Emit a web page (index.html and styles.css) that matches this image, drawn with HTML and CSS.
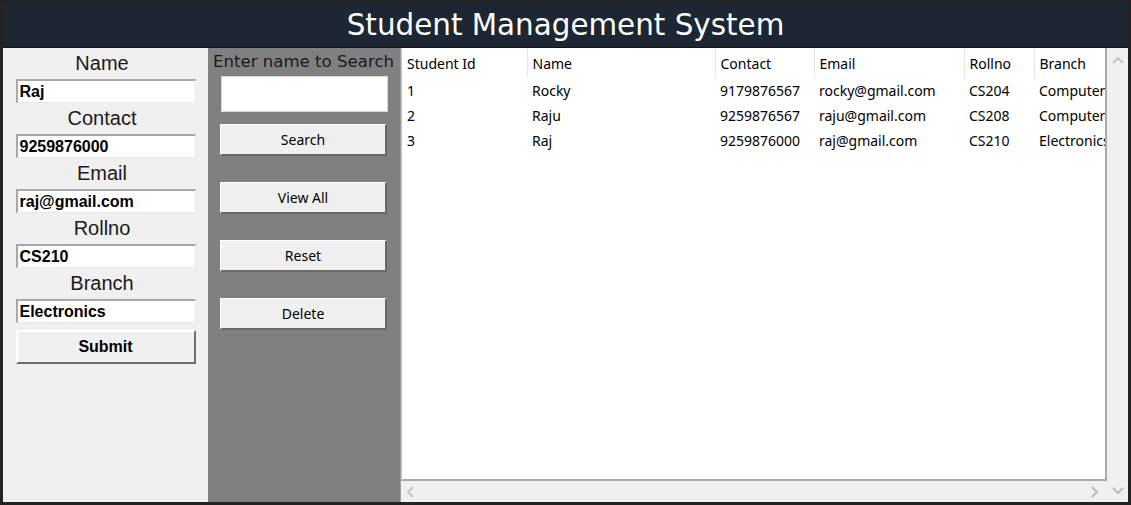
FILE: index.html
```html
<!DOCTYPE html>
<html>
<head>
<meta charset="utf-8">
<link rel="stylesheet" href="styles.css">
</head>
<body>
<div class="frame">
  <header class="title-bar">Student Management System</header>
  <main class="main">
    <section class="form-panel">
      <div class="field-label">Name</div>
      <div class="entry">Raj</div>
      <div class="field-label">Contact</div>
      <div class="entry">9259876000</div>
      <div class="field-label">Email</div>
      <div class="entry">raj@gmail.com</div>
      <div class="field-label">Rollno</div>
      <div class="entry">CS210</div>
      <div class="field-label">Branch</div>
      <div class="entry">Electronics</div>
      <button class="submit-btn">Submit</button>
    </section>
    <section class="action-panel">
      <div class="search-label">Enter name to Search</div>
      <div class="search-entry"></div>
      <button class="action-btn">Search</button>
      <button class="action-btn">View All</button>
      <button class="action-btn">Reset</button>
      <button class="action-btn">Delete</button>
    </section>
    <section class="table-area">
      <div class="table-view">
        <table class="grid">
          <colgroup>
            <col class="c-id"><col class="c-name"><col class="c-contact"><col class="c-email"><col class="c-roll"><col class="c-branch">
          </colgroup>
          <thead>
            <tr><th>Student Id</th><th>Name</th><th>Contact</th><th>Email</th><th>Rollno</th><th>Branch</th></tr>
          </thead>
          <tbody>
            <tr><td>1</td><td>Rocky</td><td>9179876567</td><td>rocky@gmail.com</td><td>CS204</td><td>Computer</td></tr>
            <tr><td>2</td><td>Raju</td><td>9259876567</td><td>raju@gmail.com</td><td>CS208</td><td>Computer</td></tr>
            <tr><td>3</td><td>Raj</td><td>9259876000</td><td>raj@gmail.com</td><td>CS210</td><td>Electronics</td></tr>
          </tbody>
        </table>
      </div>
      <div class="vscroll">
        <svg class="arrow" width="12" height="8" viewBox="0 0 12 8"><path d="M1 7 L6 2 L11 7" fill="none" stroke="#c4c4c4" stroke-width="1.8"/></svg>
        <svg class="arrow" width="12" height="8" viewBox="0 0 12 8"><path d="M1 1 L6 6 L11 1" fill="none" stroke="#b8b8b8" stroke-width="1.8"/></svg>
      </div>
      <div class="hscroll">
        <svg class="arrow" width="8" height="12" viewBox="0 0 8 12"><path d="M7 1 L2 6 L7 11" fill="none" stroke="#c4c4c4" stroke-width="1.8"/></svg>
        <svg class="arrow" width="8" height="12" viewBox="0 0 8 12"><path d="M1 1 L6 6 L1 11" fill="none" stroke="#b8b8b8" stroke-width="1.8"/></svg>
      </div>
    </section>
  </main>
</div>
</body>
</html>
```

FILE: styles.css
```css
html, body {
  margin: 0;
  padding: 0;
  background: #232323;
}
.frame {
  width: 1131px;
  height: 505px;
  box-sizing: border-box;
  padding: 3px 3px 3px 3px;
  background: #232323;
  display: flex;
  flex-direction: column;
}
.title-bar {
  height: 44px;
  flex: none;
  background: #1c2733;
  color: #ffffff;
  font-family: "DejaVu Sans", Verdana, sans-serif;
  font-size: 29.4px;
  line-height: 44px;
  text-align: center;
  border-bottom: 1px solid #10161d;
}
.main {
  flex: 1;
  display: grid;
  grid-template-columns: 205px 193px 1fr;
  min-height: 0;
}
.form-panel {
  background: #f0f0f0;
  display: flex;
  flex-direction: column;
  align-items: center;
}
.field-label {
  height: 31px;
  line-height: 31px;
  font-family: "Liberation Sans", Arial, sans-serif;
  font-size: 20px;
  color: #1a1a1a;
  text-align: center;
  width: 100%;
  box-sizing: border-box;
  padding-right: 7px;
}
.entry {
  width: 180px;
  height: 24px;
  box-sizing: border-box;
  background: #ffffff;
  border-top: 2px solid #a8a8a8;
  border-left: 2px solid #a8a8a8;
  border-bottom: 1px solid #e8e8e8;
  border-right: 1px solid #e8e8e8;
  font-family: "Liberation Sans", Arial, sans-serif;
  font-weight: bold;
  font-size: 16px;
  line-height: 21px;
  padding-left: 2px;
  color: #000;
}
.submit-btn {
  margin-top: 7px;
  width: 180px;
  height: 34px;
  box-sizing: border-box;
  background: #f0f0f0;
  border-top: 2px solid #ffffff;
  border-left: 2px solid #ffffff;
  border-bottom: 2px solid #6e6e6e;
  border-right: 2px solid #6e6e6e;
  font-family: "Liberation Sans", Arial, sans-serif;
  font-weight: bold;
  font-size: 16px;
  color: #000;
  padding: 0;
}
.action-panel {
  background: #808080;
  display: flex;
  flex-direction: column;
  align-items: center;
  border-right: 1px solid #a0a0a0;
}
.search-label {
  height: 28px;
  line-height: 28px;
  font-family: "DejaVu Sans", Verdana, sans-serif;
  font-size: 16.6px;
  color: #1a1a1a;
  white-space: nowrap;
  margin-left: -1px;
}
.search-entry {
  width: 167px;
  height: 36px;
  box-sizing: border-box;
  background: #ffffff;
  border: 1px solid #d8d8d8;
}
.action-btn {
  width: 167px;
  height: 32px;
  box-sizing: border-box;
  background: #f0f0f0;
  border-top: 1px solid #ffffff;
  border-left: 1px solid #ffffff;
  border-bottom: 2px solid #6a6a6a;
  border-right: 2px solid #6a6a6a;
  font-family: "Noto Sans", "Segoe UI", sans-serif;
  font-size: 14px;
  color: #000;
  padding: 0;
  margin-top: 12px;
  margin-left: -1px;
}
.action-btn + .action-btn {
  margin-top: 26px;
}
.table-area {
  display: grid;
  grid-template-columns: 1fr 21px;
  grid-template-rows: 1fr 21px;
  min-height: 0;
  min-width: 0;
}
.table-view {
  background: #ffffff;
  overflow: hidden;
  border-bottom: 2px solid #a6abb0;
  border-right: 2px solid #a6abb0;
  border-left: 1px solid #bfc3c7;
}
.grid {
  border-collapse: collapse;
  table-layout: fixed;
  width: 760px;
  font-family: "Noto Sans", "Segoe UI", sans-serif;
  font-size: 14px;
  color: #000;
}
.c-id { width: 125px; }
.c-name { width: 188px; }
.c-contact { width: 99px; }
.c-email { width: 150px; }
.c-roll { width: 70px; }
.c-branch { width: 128px; }
.grid th {
  height: 30px;
  font-weight: normal;
  text-align: left;
  padding: 0 0 0 5px;
  border-right: 1px solid #e5e5e5;
  white-space: nowrap;
  overflow: hidden;
}
.grid td {
  height: 25px;
  padding: 0 0 0 5px;
  white-space: nowrap;
  overflow: hidden;
  line-height: 25px;
}
.vscroll {
  grid-row: 1 / 3;
  grid-column: 2;
  background: #f0f0f0;
  display: flex;
  flex-direction: column;
  justify-content: space-between;
  align-items: center;
  padding: 8px 0 7px 0;
}
.hscroll {
  grid-row: 2;
  grid-column: 1;
  background: #f0f0f0;
  display: flex;
  justify-content: space-between;
  align-items: center;
  padding: 0 8px 0 5px;
}
.arrow {
  display: block;
}
```
